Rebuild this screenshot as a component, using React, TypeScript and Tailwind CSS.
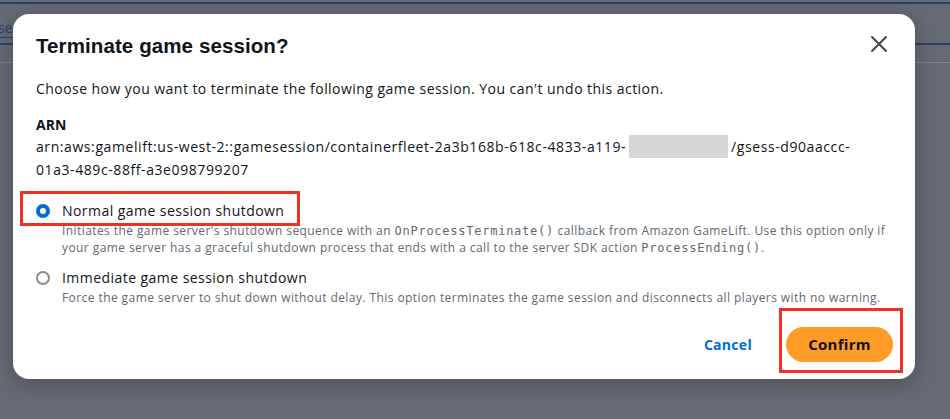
import { useState } from "react";

type Option = {
  id: string;
  label: string;
  description: React.ReactNode;
};

const code = "font-['DejaVu_Sans_Mono',monospace] text-[12px] leading-[16px] tracking-[0.75px]";

const options: Option[] = [
  {
    id: "normal",
    label: "Normal game session shutdown",
    description: (
      <>
        Initiates the game server's shutdown sequence with an{" "}
        <span className={code}>OnProcessTerminate()</span> callback from Amazon GameLift. Use this option only if
        your game server has a graceful shutdown process that ends with a call to the server SDK action{" "}
        <span className={code}>ProcessEnding()</span>.
      </>
    ),
  },
  {
    id: "immediate",
    label: "Immediate game session shutdown",
    description:
      "Force the game server to shut down without delay. This option terminates the game session and disconnects all players with no warning.",
  },
];

export default function App() {
  const [selected, setSelected] = useState("normal");

  return (
    <div className="relative h-[419px] w-[950px] overflow-hidden bg-[#656a73] font-['Open_Sans',sans-serif] text-[#0f141a]">

      {/* page behind the overlay */}
      <div className="mt-[2px] h-[2px] bg-[#2b3f68]" />
      <div className="h-[39px] pt-[14px] text-[14px] leading-[20px] text-[#27416f]">
        <span className="-ml-[2px] border-b border-[#27416f]">se</span>
      </div>
      <div className="h-[2px] bg-[#2b3f68]" />
      <div className="mt-[17px] h-px bg-[#7c818a]" />

      <div className="absolute left-[13px] top-[14px] flex h-[365px] w-[902px] flex-col rounded-2xl bg-white pl-[23px] pr-[27px] pt-[20px] shadow-[0_4px_20px_rgba(0,0,0,0.25)]">

        <div className="flex items-start justify-between">
          <h1 className="font-['Liberation_Sans',sans-serif] text-[20.5px] font-bold leading-[24px] tracking-[0.1px]">
            Terminate game session?
          </h1>
          <button className="mt-[1px] text-[#424650]">
            <svg width="18" height="18" viewBox="0 0 18 18" fill="none" stroke="currentColor" strokeWidth="2" strokeLinecap="round">
              <path d="M2 2 L16 16 M16 2 L2 16" />
            </svg>
          </button>
        </div>

        <p className="mt-[21px] text-[14px] leading-[20px] tracking-[0.45px]">
          Choose how you want to terminate the following game session. You can't undo this action.
        </p>

        <div className="mt-[16px]">
          <div className="text-[14px] font-bold leading-[20px]">ARN</div>
          <div className="text-[14px] leading-[23px] tracking-[0.58px]">
            arn:aws:gamelift:us-west-2::gamesession/containerfleet-2a3b168b-618c-4833-a119-
            <span className="mx-[3px] inline-block h-[23px] w-[99px] align-top bg-[#d6d6d6]" />
            /gsess-d90aaccc-01a3-489c-88ff-a3e098799207
          </div>
        </div>

        <div className="mt-[20px] flex flex-col gap-[12px]">
          {options.map((o) => (
            <label key={o.id} className="relative flex cursor-pointer gap-[12px]" onClick={() => setSelected(o.id)}>
              {o.id === "normal" && (
                <span className="pointer-events-none absolute -left-[16px] -top-[10px] h-[35px] w-[280px] border-[3px] border-[#ee2f24]" />
              )}
              <span
                className={
                  selected === o.id
                    ? "mt-[3px] h-[14px] w-[14px] shrink-0 rounded-full border-[4px] border-[#006ce0] bg-white"
                    : "mt-[3px] h-[14px] w-[14px] shrink-0 rounded-full border-2 border-[#8c8c94] bg-white"
                }
              />
              <span className="flex flex-col">
                <span className="text-[14px] leading-[20px] tracking-[0.45px]">{o.label}</span>
                <span className="mt-[1px] text-[12px] leading-[17px] tracking-[0.42px] text-[#656871]">{o.description}</span>
              </span>
            </label>
          ))}
        </div>

        <div className="mt-[21px] flex items-center justify-end gap-[34px]">
          <button className="text-[14px] font-bold leading-[20px] tracking-[0.3px] text-[#006ce0]">Cancel</button>
          <div className="relative">
            <span className="pointer-events-none absolute -left-[7px] -top-[19px] h-[65px] w-[124px] border-[3px] border-[#ee2f24]" />
            <button className="-mr-[5px] h-[35px] w-[107px] rounded-full bg-[#ff9b26] text-[15px] font-bold tracking-[0.3px] text-[#0f141a]">
              Confirm
            </button>
          </div>
        </div>

      </div>
    </div>
  );
}
